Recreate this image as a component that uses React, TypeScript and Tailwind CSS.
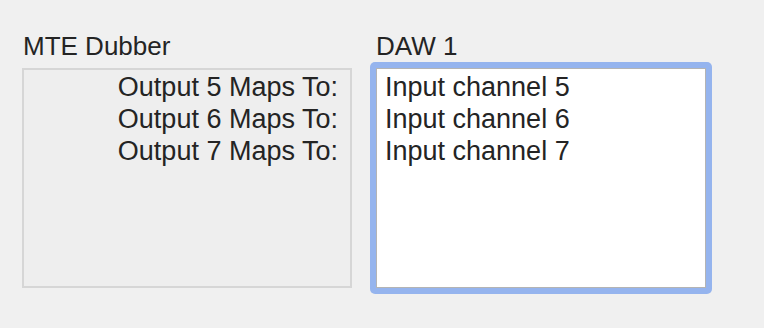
import React from 'react';

const outputs = [5, 6, 7];

export default function App() {
  return (
    <div
      className="w-[764px] h-[328px] bg-[#f0f0f0] text-[#242424] flex gap-6 pl-[22px] pt-[30px]"
      style={{ fontFamily: '"Liberation Sans", Arial, sans-serif' }}
    >
      <div className="w-[330px] flex flex-col">
        <div className="text-[26px] leading-[32px] mb-[6px] pl-px">MTE Dubber</div>
        <div className="h-[220px] border-2 border-[#d6d6d6] bg-[#eeeeee] pt-px pr-[12px] text-right">
          {outputs.map((n) => (
            <div key={n} className="text-[27px] leading-[32px]">
              Output {n} Maps To:
            </div>
          ))}
        </div>
      </div>

      <div className="w-[330px] flex flex-col">
        <div className="text-[26px] leading-[32px] mb-[6px]">DAW 1</div>
        <div className="-m-[6px] p-[6px] rounded-[5px] bg-[#95b4ee]">
          <div className="h-[220px] border border-[#b4b4b4] bg-white pt-[2px] pl-2">
            {outputs.map((n) => (
              <div key={n} className="text-[27px] leading-[32px]">
                Input channel {n}
              </div>
            ))}
          </div>
        </div>
      </div>
    </div>
  );
}
